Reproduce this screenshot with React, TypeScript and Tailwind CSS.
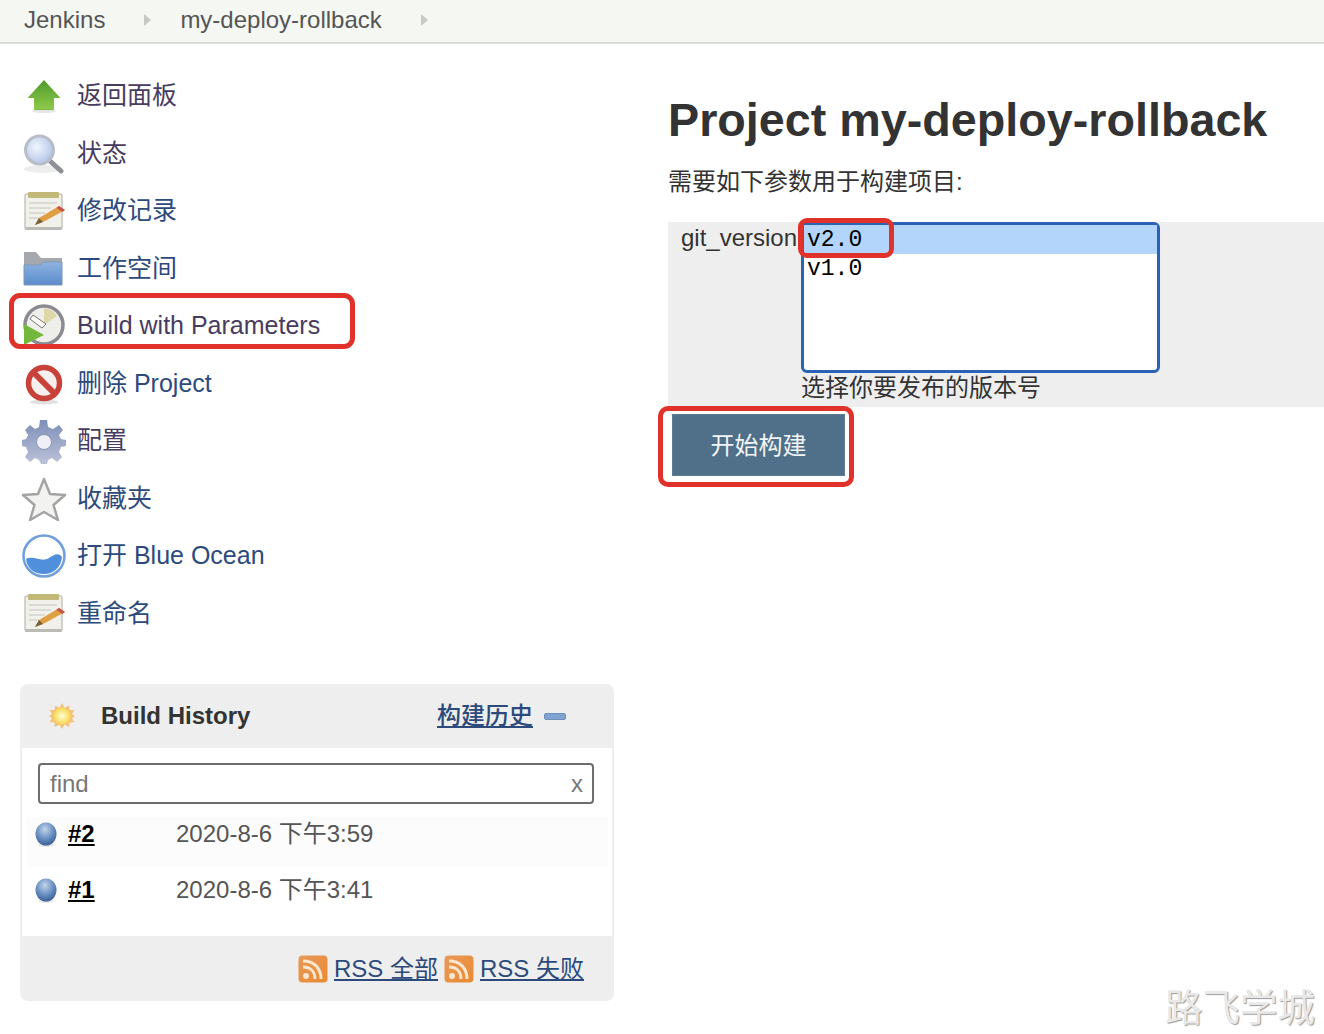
import type { ReactNode } from "react"

const cjk = "font-['Liberation_Sans','Noto_Sans_CJK_SC',sans-serif]"

function Arrow() {
  return (
    <svg width="46" height="46" viewBox="0 0 46 46">
      <defs>
        <linearGradient id="ar" x1="0" y1="0" x2="0" y2="1">
          <stop offset="0" stopColor="#4f9a2a" />
          <stop offset="1" stopColor="#8fcb4c" />
        </linearGradient>
      </defs>
      <path d="M23 7 L39.500 25 H33 V37 H13 V25 H6.500 Z" fill="url(#ar)" />
      <ellipse cx="23" cy="38" rx="12" ry="2" fill="#000" opacity="0.1" />
    </svg>
  )
}

function Search() {
  return (
    <svg width="46" height="46" viewBox="0 0 46 46">
      <defs>
        <radialGradient id="gl" cx="0.4" cy="0.4" r="0.7">
          <stop offset="0" stopColor="#f1f5fd" />
          <stop offset="1" stopColor="#aabfe6" />
        </radialGradient>
      </defs>
      <ellipse cx="22" cy="39" rx="19" ry="4" fill="#000" opacity="0.07" />
      <path d="M29 31 L40 41" stroke="#8d9094" strokeWidth="5" strokeLinecap="round" />
      <circle cx="18.500" cy="20" r="14" fill="url(#gl)" stroke="#b7bec8" strokeWidth="3" />
    </svg>
  )
}

function Notepad() {
  return (
    <svg width="46" height="46" viewBox="0 0 46 46">
      <rect x="4" y="6" width="37" height="35" rx="2" fill="#f1f0ea" stroke="#c6c6c0" strokeWidth="1.500" />
      <rect x="7" y="4" width="31" height="6" rx="1" fill="#c2b877" />
      <path d="M8 15 H36 M8 20 H30 M8 25 H24 M8 30 H18" stroke="#d3d3d0" strokeWidth="1.500" />
      <path d="M14 37 L18 30 L38 18 L44 22 L24 33 Z" fill="#dfa043" />
      <path d="M38 18 L44 22 L41.500 24 L35.500 20 Z" fill="#c9534a" />
      <path d="M14 37 L18 30 L22 34 Z" fill="#75613e" />
      <rect x="4" y="39" width="37" height="3" rx="1" fill="#bbbbb6" />
    </svg>
  )
}

function Folder() {
  return (
    <svg width="46" height="46" viewBox="0 0 46 46">
      <defs>
        <linearGradient id="fo" x1="0" y1="0" x2="0" y2="1">
          <stop offset="0" stopColor="#8eb3e2" />
          <stop offset="1" stopColor="#5b8ccb" />
        </linearGradient>
      </defs>
      <path d="M3 7 H15 L20 13 H41 V22 H3 Z" fill="#a5a9ad" />
      <path d="M3 20 H19 L22 17 H41 V40 H3 Z" fill="url(#fo)" stroke="#7c98b8" strokeWidth="1" />
    </svg>
  )
}

function BuildClock() {
  return (
    <svg width="46" height="46" viewBox="0 0 46 46">
      <circle cx="23" cy="22" r="19" fill="#eeeeea" stroke="#8b8a92" strokeWidth="3.500" />
      <path d="M23 5 A17 17 0 0 1 36 13 L23 22 Z" fill="#ded8a8" />
      <path d="M12 12 L25 21 L21 25 L9 16 Z" fill="#f8f8f4" stroke="#777" strokeWidth="1" />
      <path d="M3 21 L23 32 L3 42 Z" fill="#73b83c" />
    </svg>
  )
}

function NoEntry() {
  return (
    <svg width="46" height="46" viewBox="0 0 46 46">
      <ellipse cx="23" cy="42" rx="14" ry="2.500" fill="#000" opacity="0.12" />
      <circle cx="23" cy="23" r="15.500" fill="#f7eeee" stroke="#c8423a" strokeWidth="5.500" />
      <path d="M12 12 L34 34" stroke="#c8423a" strokeWidth="6" />
    </svg>
  )
}

function Gear() {
  return (
    <svg width="46" height="46" viewBox="0 -1 46 46">
      <defs>
        <linearGradient id="ge" x1="0" y1="0" x2="0" y2="1">
          <stop offset="0" stopColor="#7d8fb8" />
          <stop offset="1" stopColor="#bcc2d8" />
        </linearGradient>
      </defs>
      <path
        d="M19 1 H26 L27 8 L32 10 L38 6 L42 11 L38 16 L40 20 L45 21 V27 L40 28 L38 33 L41 38 L36 43 L31 39 L27 41 L26 45 H20 L18 41 L14 39 L9 43 L4 38 L7 33 L5 28 L1 27 V21 L5 20 L7 16 L4 11 L9 6 L14 10 L18 8 Z"
        fill="url(#ge)"
      />
      <circle cx="23" cy="23" r="7.500" fill="#eef0f6" stroke="#8d98b5" strokeWidth="1" />
    </svg>
  )
}

function Star() {
  return (
    <svg width="46" height="46" viewBox="0 -2 46 46">
      <path
        d="M23 2 L29 17 L44 18 L32.500 28 L37 43 L23 35 L9 43 L13.500 28 L2 18 L17 17 Z"
        fill="#f2f2f0"
        stroke="#a3a5a3"
        strokeWidth="2.500"
        strokeLinejoin="round"
      />
    </svg>
  )
}

function Ocean() {
  return (
    <svg width="46" height="46" viewBox="0 0 46 46">
      <circle cx="23" cy="23" r="20.500" fill="#fff" stroke="#6f9fdc" strokeWidth="2.500" />
      <path d="M5 26 C14 22 20 30 28 25 C33 22 37 19 41 24 C40 34 33 41 23 41 C13 41 6 35 5 26 Z" fill="#4f8fdc" />
    </svg>
  )
}

function Sun() {
  return (
    <svg width="28" height="28" viewBox="0 0 28 28" className="blur-[0.4px]">
      <defs>
        <radialGradient id="su" cx="0.5" cy="0.5" r="0.5">
          <stop offset="0" stopColor="#fffbd8" />
          <stop offset="1" stopColor="#f7d84f" />
        </radialGradient>
      </defs>
      <path
        d="M14 1 L16.500 6 L21 3.500 L21.500 8 L26.500 8 L24 12 L27 14 L24 16.500 L26.500 20 L21.500 20.500 L21 25 L16.500 22.500 L14 27 L11.500 22.500 L7 25 L6.500 20.500 L1.500 20 L4 16.500 L1 14 L4 12 L1.500 8 L6.500 8 L7 3.500 L11.500 6 Z"
        fill="#f4c27a"
      />
      <circle cx="14" cy="14" r="8.500" fill="url(#su)" />
    </svg>
  )
}

function Ball() {
  return (
    <svg width="24" height="26" viewBox="0 0 24 26" className="blur-[0.4px]">
      <defs>
        <radialGradient id="ba" cx="0.45" cy="0.3" r="0.75">
          <stop offset="0" stopColor="#c5d5ea" />
          <stop offset="0.5" stopColor="#6f94c6" />
          <stop offset="1" stopColor="#31598f" />
        </radialGradient>
      </defs>
      <ellipse cx="12" cy="24" rx="8" ry="2" fill="#000" opacity="0.08" />
      <ellipse cx="12" cy="13" rx="10.500" ry="11.500" fill="url(#ba)" />
    </svg>
  )
}

function Rss() {
  return (
    <svg width="30" height="28" viewBox="0 0 30 28" className="shrink-0 blur-[0.4px]">
      <defs>
        <linearGradient id="rs" x1="0" y1="0" x2="1" y2="1">
          <stop offset="0" stopColor="#e8995a" />
          <stop offset="1" stopColor="#ea8a32" />
        </linearGradient>
      </defs>
      <rect x="0.500" y="0.500" width="29" height="27" rx="4" fill="url(#rs)" />
      <circle cx="8" cy="21" r="3" fill="#fbe7d0" />
      <path d="M5 12 C12 12 17 16 17 24" fill="none" stroke="#fbe7d0" strokeWidth="3" />
      <path d="M5 6 C16 6 23 13 23 24" fill="none" stroke="#fbe7d0" strokeWidth="3" />
    </svg>
  )
}

function Crumb({ children }: { children: ReactNode }) {
  return (
    <>
      <span>{children}</span>
      <span className="w-0 h-0 ml-[39px] mr-[29px] border-y-[6px] border-y-transparent border-l-[7px] border-l-[#c6cac6]" />
    </>
  )
}

const menu: { icon: ReactNode; label: string; color: string; boxed?: boolean }[] = [
  { icon: <Arrow />, label: "返回面板", color: "text-[#483b60]" },
  { icon: <Search />, label: "状态", color: "text-[#483b60]" },
  { icon: <Notepad />, label: "修改记录", color: "text-[#2d4a7c]" },
  { icon: <Folder />, label: "工作空间", color: "text-[#2d4a7c]" },
  { icon: <BuildClock />, label: "Build with Parameters", color: "text-[#483b60]", boxed: true },
  { icon: <NoEntry />, label: "删除 Project", color: "text-[#2d4a7c]" },
  { icon: <Gear />, label: "配置", color: "text-[#483b60]" },
  { icon: <Star />, label: "收藏夹", color: "text-[#2d4a7c]" },
  { icon: <Ocean />, label: "打开 Blue Ocean", color: "text-[#2d4a7c]" },
  { icon: <Notepad />, label: "重命名", color: "text-[#2d4a7c]" },
]

const builds = [
  { id: "#2", date: "2020-8-6 下午3:59", row: "mt-[13px] h-[50px] pt-px bg-[#fcfcfc]" },
  { id: "#1", date: "2020-8-6 下午3:41", row: "h-[56px] pt-[7px] bg-white" },
]

export default function App() {
  return (
    <div className={`relative h-[1034px] overflow-hidden bg-white text-[24px] text-[#333] ${cjk}`}>
      <div className="h-[44px] flex items-center pl-[24px] pb-[2px] bg-[#f5f7f3] border-b-2 border-[#d8dbd6] text-[#555]">
        <Crumb>Jenkins</Crumb>
        <Crumb>my-deploy-rollback</Crumb>
      </div>

      <div className="flex">
        <div className="w-[668px] shrink-0 pl-[20px] pt-[23px]">
          {menu.map((m) => (
            <div key={m.label} className="relative h-[57.5px] flex items-center gap-[10px] pl-px">
              <div className="w-[46px] h-[46px] shrink-0 blur-[0.5px]">{m.icon}</div>
              <span className={`text-[25px] ${m.color}`}>{m.label}</span>
              {m.boxed && (
                <div className="absolute left-[-11px] top-[-4px] w-[346px] h-[56px] border-[5px] border-[#e0322a] rounded-[11px]" />
              )}
            </div>
          ))}

          <div className="mt-[42px] w-[594px] h-[317px] bg-[#eee] rounded-[8px] px-[2px] flex flex-col">
            <div className="h-[64px] flex items-center shrink-0 pl-[26px] pr-[46px]">
              <Sun />
              <span className="ml-[25px] font-bold">Build History</span>
              <span className="ml-auto underline font-medium text-[#2d4a7c]">构建历史</span>
              <span className="ml-[11px] w-[22px] h-[7px] rounded-[2px] bg-[#7fa4cf] border border-[#6d8fbb]" />
            </div>
            <div className="bg-white h-[188px] shrink-0 pt-[15px] px-[4px]">
              <div className="ml-[12px] mr-[14px] h-[41px] border-2 border-[#6d6d6d] rounded-[4px] flex items-center justify-between pl-[10px] pr-[9px] text-[#777]">
                <span>find</span>
                <span>x</span>
              </div>
              {builds.map((b) => (
                <div key={b.id} className={b.row}>
                  <div className="h-[32px] flex items-center pl-[8px]">
                    <Ball />
                    <span className="ml-[10px] w-[108px] font-bold underline text-black">{b.id}</span>
                    <span className="text-[#555]">{b.date}</span>
                  </div>
                </div>
              ))}
            </div>
            <div className="flex-1 flex items-center justify-end pr-[28px] text-[#2d4a7c]">
              <Rss />
              <span className="ml-[6px] underline">RSS 全部</span>
              <span className="ml-[6px]"><Rss /></span>
              <span className="ml-[6px] underline">RSS 失败</span>
            </div>
          </div>
        </div>

        <div className="flex-1 pt-[44px]">
          <h1 className="text-[46.7px] leading-[64px] font-bold text-[#333]">Project my-deploy-rollback</h1>
          <p className="mt-[14px] leading-[32px]">需要如下参数用于构建项目:</p>
          <div className="mt-[24px] h-[185px] bg-[#eee] flex pl-[13px]">
            <span className="w-[120px] shrink-0 leading-[32px]">git_version</span>
            <div>
              <div className="relative w-[359px] h-[151px] border-[3px] border-[#2a62b8] rounded-[6px] bg-white font-['Liberation_Mono',monospace] text-[23px] text-black">
                <div className="h-[29px] pl-[3px] leading-[30px] bg-[#b4d5fb]">v2.0</div>
                <div className="h-[30px] pl-[3px] leading-[31px]">v1.0</div>
                <div className="absolute left-[-6px] top-[-7px] w-[96px] h-[40px] border-[5px] border-[#e0322a] rounded-[9px]" />
              </div>
              <div className="leading-[30px]">选择你要发布的版本号</div>
            </div>
          </div>
          <div className="relative mt-[7px] ml-[4px] w-[173px] h-[62px] pt-[2px] bg-[#4f7088] border border-[#5e7d93] flex items-center justify-center text-[#f3f5f6]">
            开始构建
            <div className="absolute left-[-15px] top-[-9px] w-[196px] h-[81px] border-[5px] border-[#e0322a] rounded-[10px]" />
          </div>
        </div>
      </div>

      <div className="absolute right-[9px] bottom-[4px] text-[37.5px] leading-[44px] text-[#e9e9e9] [text-shadow:1px_1px_1px_#9a9a9a]">
        路飞学城
      </div>
    </div>
  )
}
